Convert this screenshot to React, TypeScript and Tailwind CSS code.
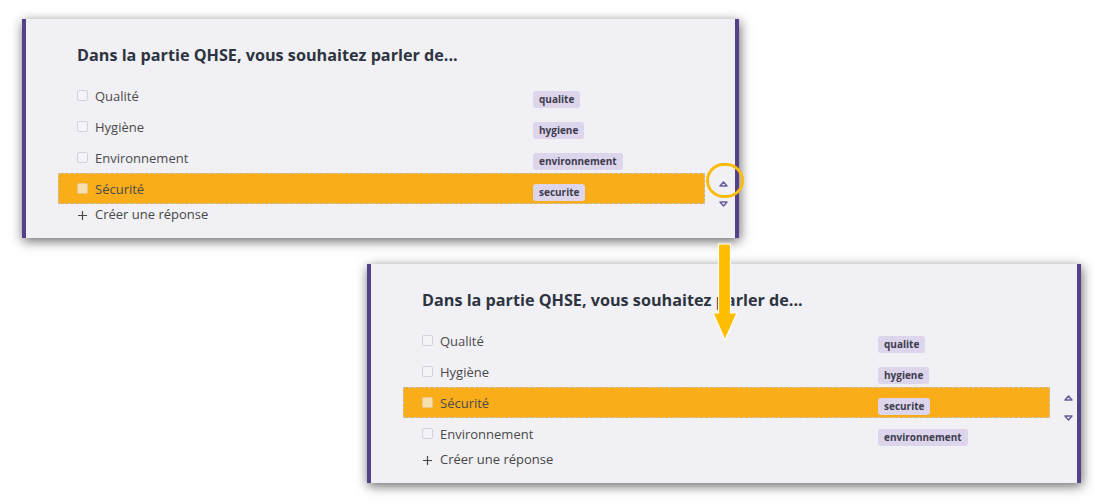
type Choice = { label: string; tag: string };

const TOP: Choice[] = [
  { label: 'Qualité', tag: 'qualite' },
  { label: 'Hygiène', tag: 'hygiene' },
  { label: 'Environnement', tag: 'environnement' },
  { label: 'Sécurité', tag: 'securite' },
];

const BOTTOM: Choice[] = [
  { label: 'Qualité', tag: 'qualite' },
  { label: 'Hygiène', tag: 'hygiene' },
  { label: 'Sécurité', tag: 'securite' },
  { label: 'Environnement', tag: 'environnement' },
];

function Triangle({ down }: { down?: boolean }) {
  return (
    <svg width="9" height="6" viewBox="0 0 9 6" className="block">
      <path
        d={down ? 'M1 1 L8 1 L4.5 5 Z' : 'M1 5 L8 5 L4.5 1 Z'}
        fill="none"
        stroke="#6c5d9e"
        strokeWidth="1.5"
        strokeLinejoin="round"
      />
    </svg>
  );
}

function Row({ choice, active }: { choice: Choice; active: boolean }) {
  return (
    <div
      className={`relative flex items-center h-[31px] pl-[18px] border ${
        active ? 'bg-[#f9ad19] border-dashed border-[#c9c2b4]' : 'border-transparent'
      }`}
    >
      <span
        className={`w-[11px] h-[11px] rounded-[2px] border ${
          active ? 'bg-[#f8dfae] border-[#e9c68a]' : 'bg-[#f4f3f7] border-[#d3d2d8]'
        }`}
      />
      <span className="ml-[7px] w-[438px] text-[13px] leading-[18px] text-[#4a4a4a]">{choice.label}</span>
      <span className="mt-[7px] h-[17px] px-[6px] flex items-center rounded-[3px] bg-[#ddd5ec] text-[10px] font-bold text-[#3d3c4d]">
        {choice.tag}
      </span>
      {active && (
        <div className="absolute left-[calc(100%+15px)] top-[7px] flex flex-col gap-[14px]">
          <Triangle />
          <Triangle down />
        </div>
      )}
    </div>
  );
}

function Panel({ choices, active, width }: { choices: Choice[]; active: number; width: string }) {
  return (
    <div
      className={`${width} h-[219px] bg-[#f1f0f5] border-x-4 border-[#55408a] shadow-[1px_3px_11px_rgba(0,0,0,0.6)] pt-[25px]`}
    >
      <h2 className="pl-[51px] text-[16.2px] leading-[22px] font-bold text-[#2d3440]">
        Dans la partie QHSE, vous souhaitez parler de...
      </h2>
      <div className="mt-[14px] ml-[32px] w-[647px]">
        {choices.map((c, i) => (
          <Row key={c.tag} choice={c} active={i === active} />
        ))}
      </div>
      <div className="flex items-center pl-[51px] h-[18px] mt-[2px] text-[13px] text-[#474747]">
        <svg width="11" height="11" viewBox="0 0 11 11" className="mr-[7px]">
          <path d="M5.5 1 V10 M1 5.5 H10" stroke="#474747" strokeWidth="1.2" />
        </svg>
        Créer une réponse
      </div>
    </div>
  );
}

export default function App() {
  return (
    <div className="relative w-[1095px] h-[504px] overflow-hidden bg-white font-['Open_Sans',sans-serif]">
      <div className="pl-[22px] pt-[19px]">
        <Panel choices={TOP} active={3} width="w-[717px]" />
      </div>
      <div className="pl-[367px] pt-[26px]">
        <Panel choices={BOTTOM} active={2} width="w-[714px]" />
      </div>

      {/* annotations */}
      <div className="absolute left-[706px] top-[163px] w-[38px] h-[35px] rounded-full border-[3px] border-[#fbbb0b]" />
      <svg width="26" height="99" viewBox="0 0 26 99" className="absolute left-[712px] top-[243px]">
        <path d="M6.5 1 H18.5 V70 H25 L13 97 L1 70 H6.5 Z" fill="#ffbd00" stroke="#ffffff" strokeWidth="1.2" />
      </svg>
    </div>
  );
}
